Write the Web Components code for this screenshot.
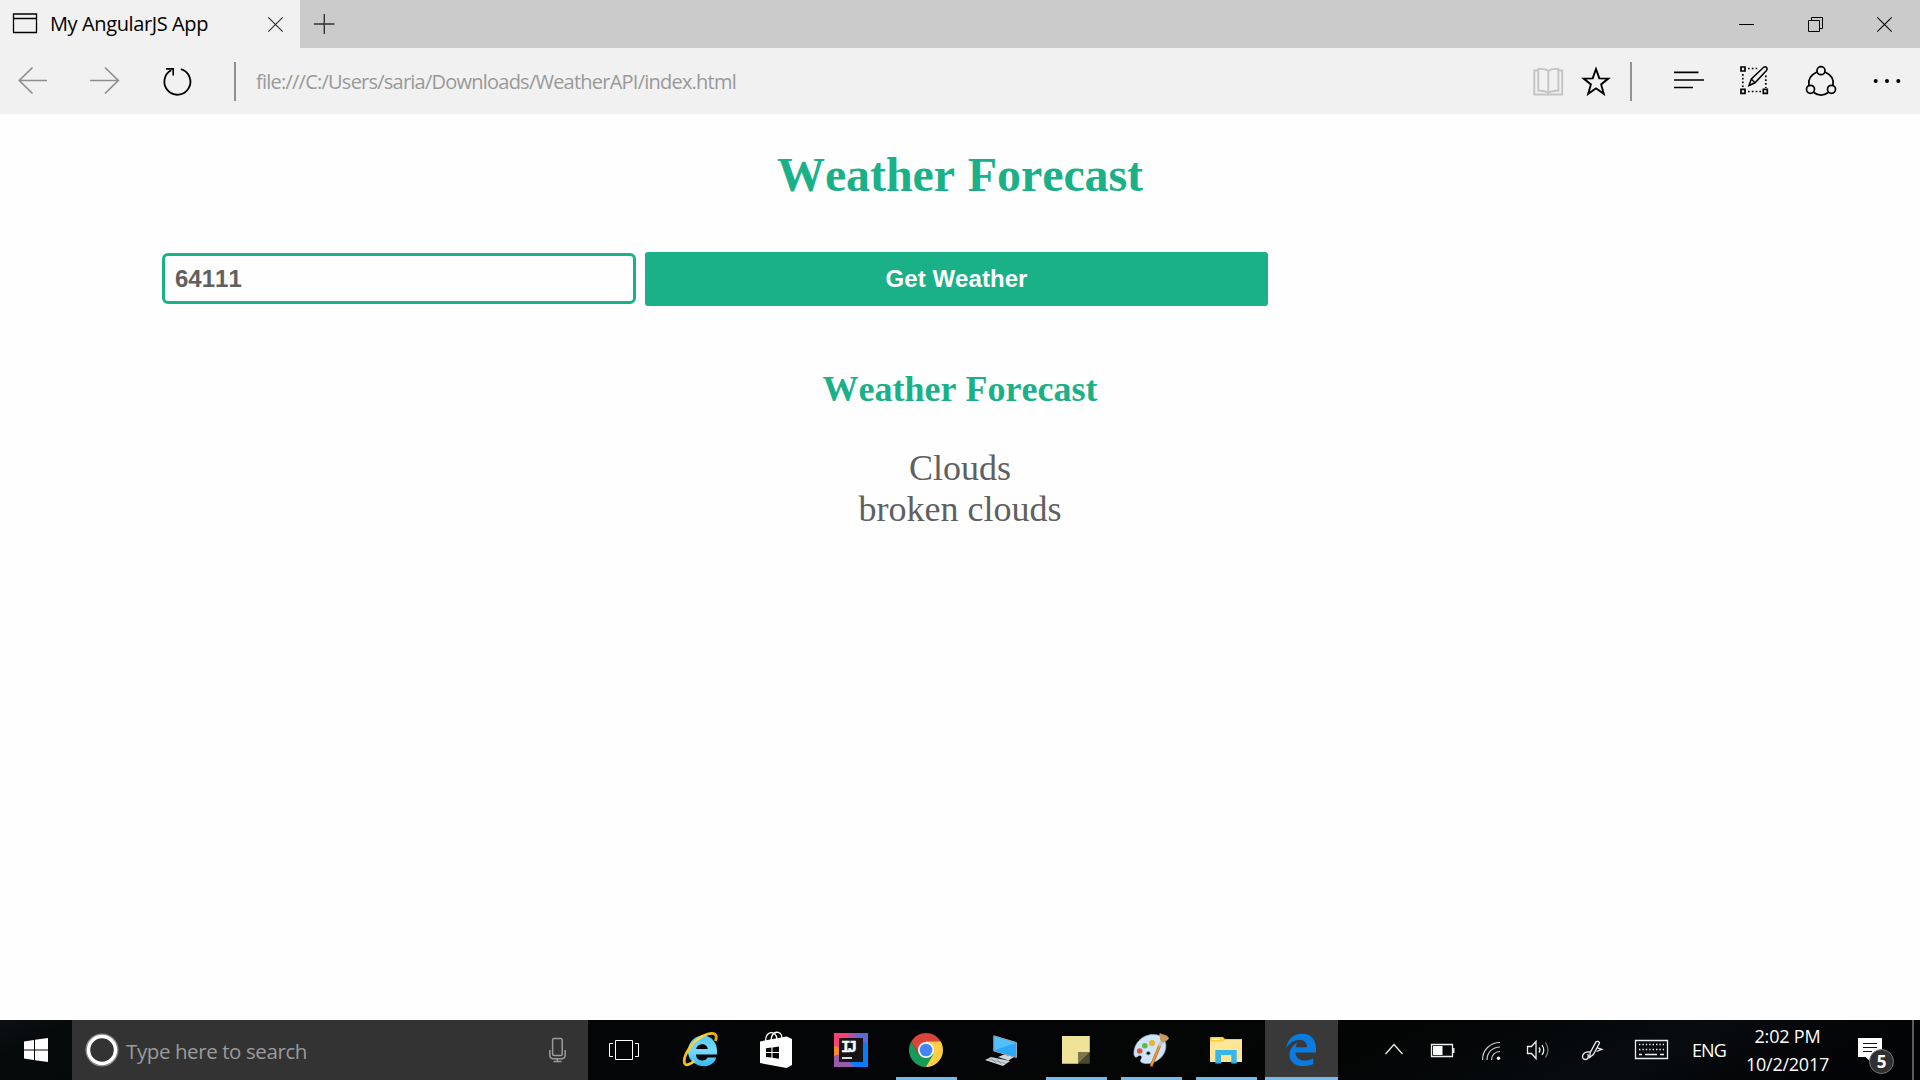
<!DOCTYPE html>
<html lang="en">
<head>
<meta charset="utf-8">
<title>My AngularJS App</title>
<style>
html,body{margin:0;padding:0;height:100%;overflow:hidden;background:#fefefe}
</style>
</head>
<body>
<desktop-screen></desktop-screen>
<script>
// Text run whose tracking is adjusted so that it fills a given width.
class FitText extends HTMLElement{
  connectedCallback(){
    const r=this.attachShadow({mode:'open'});
    r.innerHTML='<style>:host{display:block;white-space:pre;flex:none}span{display:inline-block}</style><span><slot></slot></span>';
    const s=r.querySelector('span'),w=+this.getAttribute('width'),n=this.textContent.length;
    const d=(w-s.getBoundingClientRect().width)/n;
    this.style.letterSpacing=d.toFixed(3)+'px';
  }
}
const define=(name,html)=>customElements.define(name,class extends HTMLElement{
  constructor(){super();this.attachShadow({mode:'open'}).innerHTML=html;}
});

define('tab-strip',`<style>
:host{display:flex;height:48px;background:#cbcbcb;font:20px "Open Sans",sans-serif;color:#000}
.tab{width:300px;box-sizing:border-box;background:#f1f1f1;display:flex;align-items:center;padding-left:50px;line-height:48px;position:relative}
fit-text{height:48px}
svg{flex:none;display:block}.fav{position:absolute;left:0;top:0}.x{margin-left:auto}
.sp{flex:1}
</style>
<div class="tab"><svg class="fav" width="50" height="48" fill="none" stroke="#000"><path d="M13.5 14H36.5V32.5H13.5ZM13.5 18.5H36.5" stroke-width="1.3"/></svg>
<fit-text width="158">My AngularJS App</fit-text>
<svg class="x" width="50" height="48" viewBox="250 0 50 48"><path d="M268.3 17.3L282.7 31.7M282.7 17.3L268.3 31.7" stroke="#333" stroke-width="1.2"/></svg></div>
<svg width="60" height="48" viewBox="300 0 60 48"><path d="M314 24H334.5M324.3 14V34" stroke="#333" stroke-width="1.4"/></svg>
<div class="sp"></div>
<svg width="210" height="48" viewBox="1710 0 210 48" fill="none" stroke="#000"><path d="M1739 24.5H1754M1808.5 20.5H1819.5V31.5H1808.5ZM1811.5 20.5V17.5H1822.5V28.5H1819.5"/><path d="M1877.3 17.3L1891.7 31.7M1891.7 17.3L1877.3 31.7" stroke-width="1.1"/></svg>`);

define('address-bar',`<style>
:host{display:flex;height:66px;background:#f1f1f1;font:20px/68px "Open Sans",sans-serif;color:#999}
svg{display:block;flex:none}.sp{flex:1}
</style>
<svg width="256" height="66" viewBox="0 48 256 66" fill="none" stroke="#8f8f8f" stroke-width="1.7">
<path d="M47 80.5H19.5M32.5 67.5L19.3 80.5L32.5 93.5M90 80.5H118M105 67.5L118.3 80.5L105 93.5"/>
<path d="M235 62V101" stroke-width="2"/>
<g stroke="#000" stroke-width="1.8"><path d="M180.8 69.2A13 13 0 1 1 171.2 70.3"/><path d="M166 68.9H173.2V75.5" stroke-width="1.6"/></g></svg>
<fit-text width="480">file:///C:/Users/saria/Downloads/WeatherAPI/index.html</fit-text>
<div class="sp"></div>
<svg width="400" height="66" viewBox="1520 48 400 66" fill="none" stroke="#000" stroke-width="1.7">
<g stroke="#c4c4c4" stroke-width="1.9"><path d="M1538 70.5H1534.3V94.5H1562.2V70.5H1558.5"/><path d="M1548.3 71C1546 69 1541.5 68.7 1538.3 69V90.8C1542.5 90.5 1546 90.9 1548.3 93C1550.5 90.9 1554.5 90.5 1558.4 90.8V69C1555 68.7 1550.5 69 1548.3 71V93"/></g>
<path stroke-width="1.9" d="M1596 69L1599.3 78.4L1608.3 78.6L1601.1 84.4L1603.8 93.8L1596 88.3L1588.2 93.8L1590.9 84.4L1583.7 78.6L1592.7 78.4Z"/>
<path d="M1631 62V101" stroke="#939393" stroke-width="2"/>
<path d="M1674 72.3H1698.5M1674 80H1704M1674 87.5H1693"/>
<g><path d="M1741 67H1745V71H1741ZM1741 89.3H1745V93.3H1741ZM1763.3 89.3H1767.3V93.3H1763.3Z"/><path stroke-dasharray="1.7 2.1" d="M1748 68.5H1758M1742.8 74V87M1765.8 75.5V88M1748 91.5H1762"/><path d="M1749 85.5L1751.3 79L1763.7 67.3C1766 65.8 1768.3 68.4 1766.5 70.5L1755 82.8ZM1751.3 79L1755 82.8" stroke-width="1.5"/></g>
<g stroke-width="1.7"><circle cx="1821" cy="70.7" r="4"/><circle cx="1810.5" cy="89.3" r="4"/><circle cx="1831.5" cy="89.3" r="4"/><path d="M1817 72C1810.5 75 1807.8 80 1809 85.5M1825 72C1831.5 75 1834.2 80 1833 85.5M1813.8 92.5C1818 96 1824 96 1828.2 92.5"/></g>
<g fill="#000" stroke="none"><circle cx="1875.7" cy="81" r="2"/><circle cx="1887" cy="81" r="2"/><circle cx="1898.3" cy="81" r="2"/></g></svg>`);

define('weather-page',`<style>
:host{flex:1;display:flex;flex-direction:column;align-items:center;background:#fefefe;font:36px/41px "Liberation Serif",serif;font-kerning:none;color:#606060;padding-top:33px}
h1,h2{margin:0;color:#1bb188;font-weight:bold}h1{font-size:48px;line-height:55px}h2{font-size:36px;line-height:41px;margin-bottom:38px}
h1 fit-text{word-spacing:1px}
.row{display:flex;align-items:center;align-self:stretch;height:60px;margin:47px 0 60px;padding-left:162px;gap:6px;font:bold 24px/27px "Liberation Sans",sans-serif;font-kerning:none}
.in{box-sizing:border-box;width:474px;height:51px;border:3px solid #1bb188;border-radius:6px;padding:9px 10px;color:#606060;margin-top:-1px}
.btn{box-sizing:border-box;width:629px;height:60px;border:3px solid #fefefe;border-radius:6px;background:#1bb188;color:#fff;display:flex;align-items:center;justify-content:center;padding-bottom:1px}
</style>
<h1><fit-text width="366">Weather Forecast</fit-text></h1>
<div class="row"><div class="in">64111</div><div class="btn"><fit-text width="142">Get Weather</fit-text></div></div>
<h2><fit-text width="275">Weather Forecast</fit-text></h2>
<fit-text width="102">Clouds</fit-text>
<fit-text width="203">broken clouds</fit-text>`);

define('task-button',`<style>
:host{display:block;flex:none;width:75px;height:60px;box-sizing:border-box}
:host([open]){background:linear-gradient(#76b9ed,#76b9ed) 7px 57px/61px 3px no-repeat}
:host([active]){background:linear-gradient(#76b9ed,#76b9ed) 1px 57px/73px 3px no-repeat,linear-gradient(#393939,#393939) 1px 0/73px 60px no-repeat}
::slotted(svg){display:block}
</style><slot></slot>`);

define('task-bar',`<style>
:host{display:flex;height:60px;flex:none;background:linear-gradient(155deg,#0b1012 0,#070a0b 4%,#040506 35%,#030404 70%,#080c0f 84%,#030405 93%);font-family:"Open Sans",sans-serif;color:#fff}
svg{display:block;flex:none}
.search{width:516px;background:#333;display:flex;color:#9b9b9b;font-size:20.5px;line-height:62px}
.mic{margin-left:auto}.sp{flex:1}
.eng{width:50px;padding-left:12px;box-sizing:border-box;font-size:18px;line-height:61px}
.clock{width:103px;box-sizing:border-box;display:flex;flex-direction:column;align-items:center;justify-content:space-between;font-size:18px;line-height:28px;padding:2px 0 2px 12px}
.act{width:79px;position:relative}.badge{position:absolute;left:36px;top:29px;box-sizing:border-box;width:25px;height:25px;border:1.5px solid #777;border-radius:50%;background:#303030;text-align:center;font:bold 17px/23px "Open Sans",sans-serif}
.end{width:8px;border-left:2px solid #5c5c5c;box-sizing:border-box}
</style>
<svg width="72" height="60" viewBox="0 1020 72 60" fill="#fff"><path d="M24 1041.4L34 1040V1049.4H24ZM35 1039.8L48 1038V1049.4H35ZM24 1050.5H34V1060L24 1058.6ZM35 1050.5H48V1062L35 1060.2Z"/></svg>
<div class="search"><svg width="54" height="60" viewBox="72 1020 54 60" fill="none"><circle cx="102" cy="1050" r="15.8" stroke="#888" stroke-width="1.5"/><circle cx="102" cy="1050" r="13.5" stroke="#fff" stroke-width="3.5"/></svg>
<fit-text width="181">Type here to search</fit-text>
<svg class="mic" width="60" height="60" viewBox="528 1020 60 60" fill="none" stroke="#9b9b9b" stroke-width="1.5"><rect x="552.6" y="1038.5" width="9.6" height="17" rx="1.5"/><path d="M549.8 1050V1055C549.8 1057 551 1058.7 553.5 1058.7H561.5C564 1058.7 565.2 1057 565.2 1055V1050M557.4 1058.7V1061.5M553.5 1061.5H561.5"/></svg></div>
<svg width="76" height="60" viewBox="588 1020 76 60" fill="none" stroke="#fff"><path d="M615.5 1040.5H632.5V1059.5H615.5ZM613 1043.5H609.5V1056.5H613M635 1043.5H638.5V1056.5H635"/></svg>
<task-button><svg width="75" height="60" viewBox="664 1020 75 60"><defs><linearGradient id="ie" x2="0" y2="1"><stop stop-color="#55c9f4"/><stop offset=".5" stop-color="#75dbff"/><stop offset="1" stop-color="#36b6ec"/></linearGradient><linearGradient id="ri"><stop stop-color="#f8bd16"/><stop offset=".5" stop-color="#ffdc45"/><stop offset="1" stop-color="#eda900"/></linearGradient></defs>
<path fill="url(#ie)" fill-rule="evenodd" d="M717 1054.5H696C696 1062 706 1062 707.5 1057.5H716.3C713 1068 701 1068 694 1063C685.5 1057 686 1044 694.5 1038.2C705 1031.5 718.5 1038 717 1054.5ZM696.2 1049H707.8C707.6 1042.5 697 1042.5 696.2 1049Z"/>
<path fill="none" stroke="url(#ri)" stroke-width="2.8" d="M715.5 1041C720.5 1027 699 1034 689.5 1048C682 1059 683 1067 689 1064.3C691 1063.5 693 1062 694.5 1060.7"/></svg></task-button>
<task-button><svg width="75" height="60" viewBox="739 1020 75 60"><path fill="#fff" d="M760 1041.5L786.5 1036.5L792 1039V1065L786.5 1068L760 1063Z"/><path fill="none" stroke="#fff" stroke-width="1.3" d="M765.5 1041C766 1030.5 776 1030 777 1039M771 1040C772 1029.5 782 1030.5 782 1038"/><path fill="#060606" d="M766 1048.3L771.4 1047.6V1052H766ZM772.5 1047.4L779 1046.5V1052H772.5ZM766 1053H771.4V1057.6L766 1057ZM772.5 1053H779V1058.7L772.5 1057.8Z"/></svg></task-button>
<task-button><svg width="75" height="60" viewBox="814 1020 75 60"><path fill="#087cfa" d="M834 1033H868V1067H834Z"/><path fill="#fe3f75" d="M834 1033H853L858 1041L840 1050L834 1046Z"/><path fill="#b850a0" d="M849 1033H856L860 1042H845Z"/><path fill="#596bd2" d="M855 1033H868V1044L858 1040Z"/><path fill="#f98a2a" d="M834 1046L842 1048L839 1057L834 1056Z"/><path fill="#9a5aa8" d="M834 1056L840 1054L855 1067H834Z"/><path fill="#171417" d="M839 1038H863V1062H839Z"/><path stroke="#fff" stroke-width="1.7" d="M842 1058H852"/><text x="841" y="1051.5" fill="#fff" stroke="#fff" stroke-width=".4" font-family="Liberation Mono" font-weight="bold" font-size="16" textLength="16">IJ</text></svg></task-button>
<task-button open><svg width="75" height="60" viewBox="889 1020 75 60"><path fill="#d9453b" d="M911.3 1041.5A17 17 0 0 1 940.7 1041.5L926 1050Z"/><path fill="#ffce44" d="M940.7 1041.5A17 17 0 0 1 926 1067L926 1050L926 1041.5Z"/><path fill="#169b59" d="M911.3 1041.5A17 17 0 0 0 926 1067L933.4 1054.3L926 1050L918.6 1054.3Z"/><path fill="#d9453b" d="M911.3 1041.5L918.6 1054.3L926 1041.5Z"/><circle cx="926" cy="1050" r="8" fill="#f4f4f4"/><circle cx="926" cy="1050" r="6.3" fill="#4285f4"/></svg></task-button>
<task-button><svg width="75" height="60" viewBox="964 1020 75 60"><path fill="#2aa9f8" stroke="#9aa5ad" d="M993.8 1035.8L1016.5 1042.5V1057.5L993.8 1051Z"/><path fill="#69c7ff" d="M994.5 1036.5L1015.5 1043L994.5 1050.3Z" opacity=".7"/><path fill="#cfd6db" d="M998 1057L1004 1054.5L1014 1057L1008.5 1060.5ZM985 1060L991 1057L1010 1061L1003 1066Z"/><path stroke="#7b868e" stroke-width=".7" fill="none" d="M988 1059L1006 1063.5M991 1057.8L996 1063M997 1059L1001 1064"/></svg></task-button>
<task-button open><svg width="75" height="60" viewBox="1039 1020 75 60"><path fill="#efe39a" d="M1062 1036H1089.8V1052L1078 1063.8H1062Z"/><path fill="#7d774d" d="M1078 1052H1089.8L1078 1063.8Z"/><path fill="#4c482c" d="M1089.8 1052V1063.8H1078Z"/></svg></task-button>
<task-button open><svg width="75" height="60" viewBox="1114 1020 75 60"><path fill="#cfe5f6" stroke="#8fb6d3" stroke-width=".7" fill-rule="evenodd" d="M1134 1055C1133 1044 1142 1034.500 1153 1034.500C1167 1034.500 1169 1048 1162 1056.500C1155 1064 1145 1065 1141 1062C1139 1060 1144 1057 1140.500 1055.500C1138 1054.500 1136 1060 1134 1055ZM1148.300 1051.500A2 1.700 0 1 0 1148.300 1055A2 1.700 0 1 0 1148.300 1051.500Z"/><circle cx="1139.700" cy="1051" r="2.800" fill="#e25347"/><circle cx="1144.800" cy="1045.700" r="2.800" fill="#60b84b"/><circle cx="1152" cy="1043" r="3" fill="#f5af2e"/><path stroke="#b85f13" stroke-width="3" d="M1151 1066.500L1160 1045"/><path stroke="#f29b43" stroke-width="1.700" d="M1151.300 1065.500L1160 1045"/><path stroke="#c1c7cc" stroke-width="3.400" d="M1159.500 1046L1162 1041.500"/><path fill="#c8995c" d="M1160 1040C1161 1037 1158 1035 1160 1033C1163 1035 1166 1034 1169 1038C1168 1041 1165 1041 1163.500 1043Z"/></svg></task-button>
<task-button open><svg width="75" height="60" viewBox="1189 1020 75 60"><path fill="#ffcb38" d="M1210 1038L1211 1037H1222L1225 1039.500V1043H1210Z"/><path fill="#d8ad56" d="M1224 1039H1242V1062H1224Z"/><path fill="#ffe697" d="M1210 1041H1223L1225 1039.500H1242V1062H1210Z"/><path fill="#ffcb38" d="M1210 1038L1211 1037H1223L1225 1039L1223 1041.500H1210Z"/><path stroke="#fff" stroke-width="1.300" d="M1212 1039.300H1220"/><path fill="#37b5e9" d="M1215.300 1063.500V1050H1236.700V1063.500H1231.300V1055H1221V1063.500Z"/></svg></task-button>
<task-button active><svg width="75" height="60" viewBox="1264 1020 75 60"><path fill="#0a7ce0" d="M1286 1048.500C1287.500 1039 1293.500 1033.700 1302 1033.700C1311.500 1033.700 1316 1040 1316 1048.500V1052.500H1295.600C1296 1062 1307 1062 1313.300 1058.200V1064C1303 1068.500 1289.500 1066 1289.500 1055C1289.500 1049 1293 1044.500 1298 1042.300C1296.500 1044 1296 1045.500 1295.800 1047.300H1307C1307 1041.500 1303.500 1040 1299.500 1040C1294 1040 1289 1043 1286 1048.500Z"/></svg></task-button>
<div class="sp"></div>
<svg width="310" height="60" viewBox="1370 1020 310 60" fill="none" stroke="#eee" stroke-width="1.300">
<path d="M1385.500 1054L1394 1044.500L1402.500 1054"/>
<path d="M1431.500 1044.500H1452.500V1056.500H1431.500ZM1453.800 1048V1053"/><path fill="#fff" stroke="none" d="M1433 1046H1442.500V1055H1433Z"/>
<g stroke="#ccc" stroke-width="1.200"><path d="M1482.500 1060C1482.500 1050 1490 1042.500 1500 1042.500M1487 1060C1487 1052.500 1492.500 1047 1500 1047M1491.500 1060C1491.500 1055 1495 1051.500 1500 1051.500"/></g><circle cx="1498.500" cy="1058.300" r="1.700" fill="#fff" stroke="none"/>
<path d="M1527.500 1046.500H1531.500L1536 1041.500V1058.500L1531.500 1053.500H1527.500Z"/><path d="M1539 1047.500Q1541 1050 1539 1052.500M1542 1045Q1545.500 1050 1542 1055"/><path stroke="#777" d="M1545.500 1042.500Q1550.500 1050 1545.500 1057.500"/>
<path d="M1589.500 1057.500L1590.300 1052.500L1596 1041.800Q1598.500 1040.500 1599.500 1043L1593.300 1054.500ZM1597.500 1047.800L1601.800 1049.300L1596.500 1051.500M1590.300 1052C1582 1050.500 1580.500 1059.300 1585 1059.500C1588.500 1059.500 1588.800 1056.500 1587.800 1054"/>
<path d="M1635.500 1040.500H1667.500V1058.500H1635.500Z"/><path stroke-dasharray="1.400 2" d="M1639 1044.500H1664M1639 1049.500H1664"/><path d="M1639 1054.500H1642M1645 1054.500H1657M1660 1054.500H1664"/></svg>
<div class="eng"><fit-text width="34">ENG</fit-text></div>
<div class="clock"><fit-text width="66">2:02 PM</fit-text><fit-text width="83">10/2/2017</fit-text></div>
<div class="act"><svg width="79" height="60" viewBox="1833 1020 79 60"><path fill="#fff" d="M1858 1038H1882V1057H1871V1062L1865.500 1057H1858Z"/><path stroke="#111" stroke-width="1.200" d="M1863 1043.500H1877M1863 1047.500H1877M1863 1051.500H1872"/></svg><div class="badge">5</div></div>
<div class="end"></div>`);

define('desktop-screen',`<style>:host{display:flex;flex-direction:column;width:1920px;height:1080px}</style>
<tab-strip></tab-strip><address-bar></address-bar><weather-page></weather-page><task-bar></task-bar>`);
customElements.define('fit-text',FitText);
</script>
</body>
</html>
